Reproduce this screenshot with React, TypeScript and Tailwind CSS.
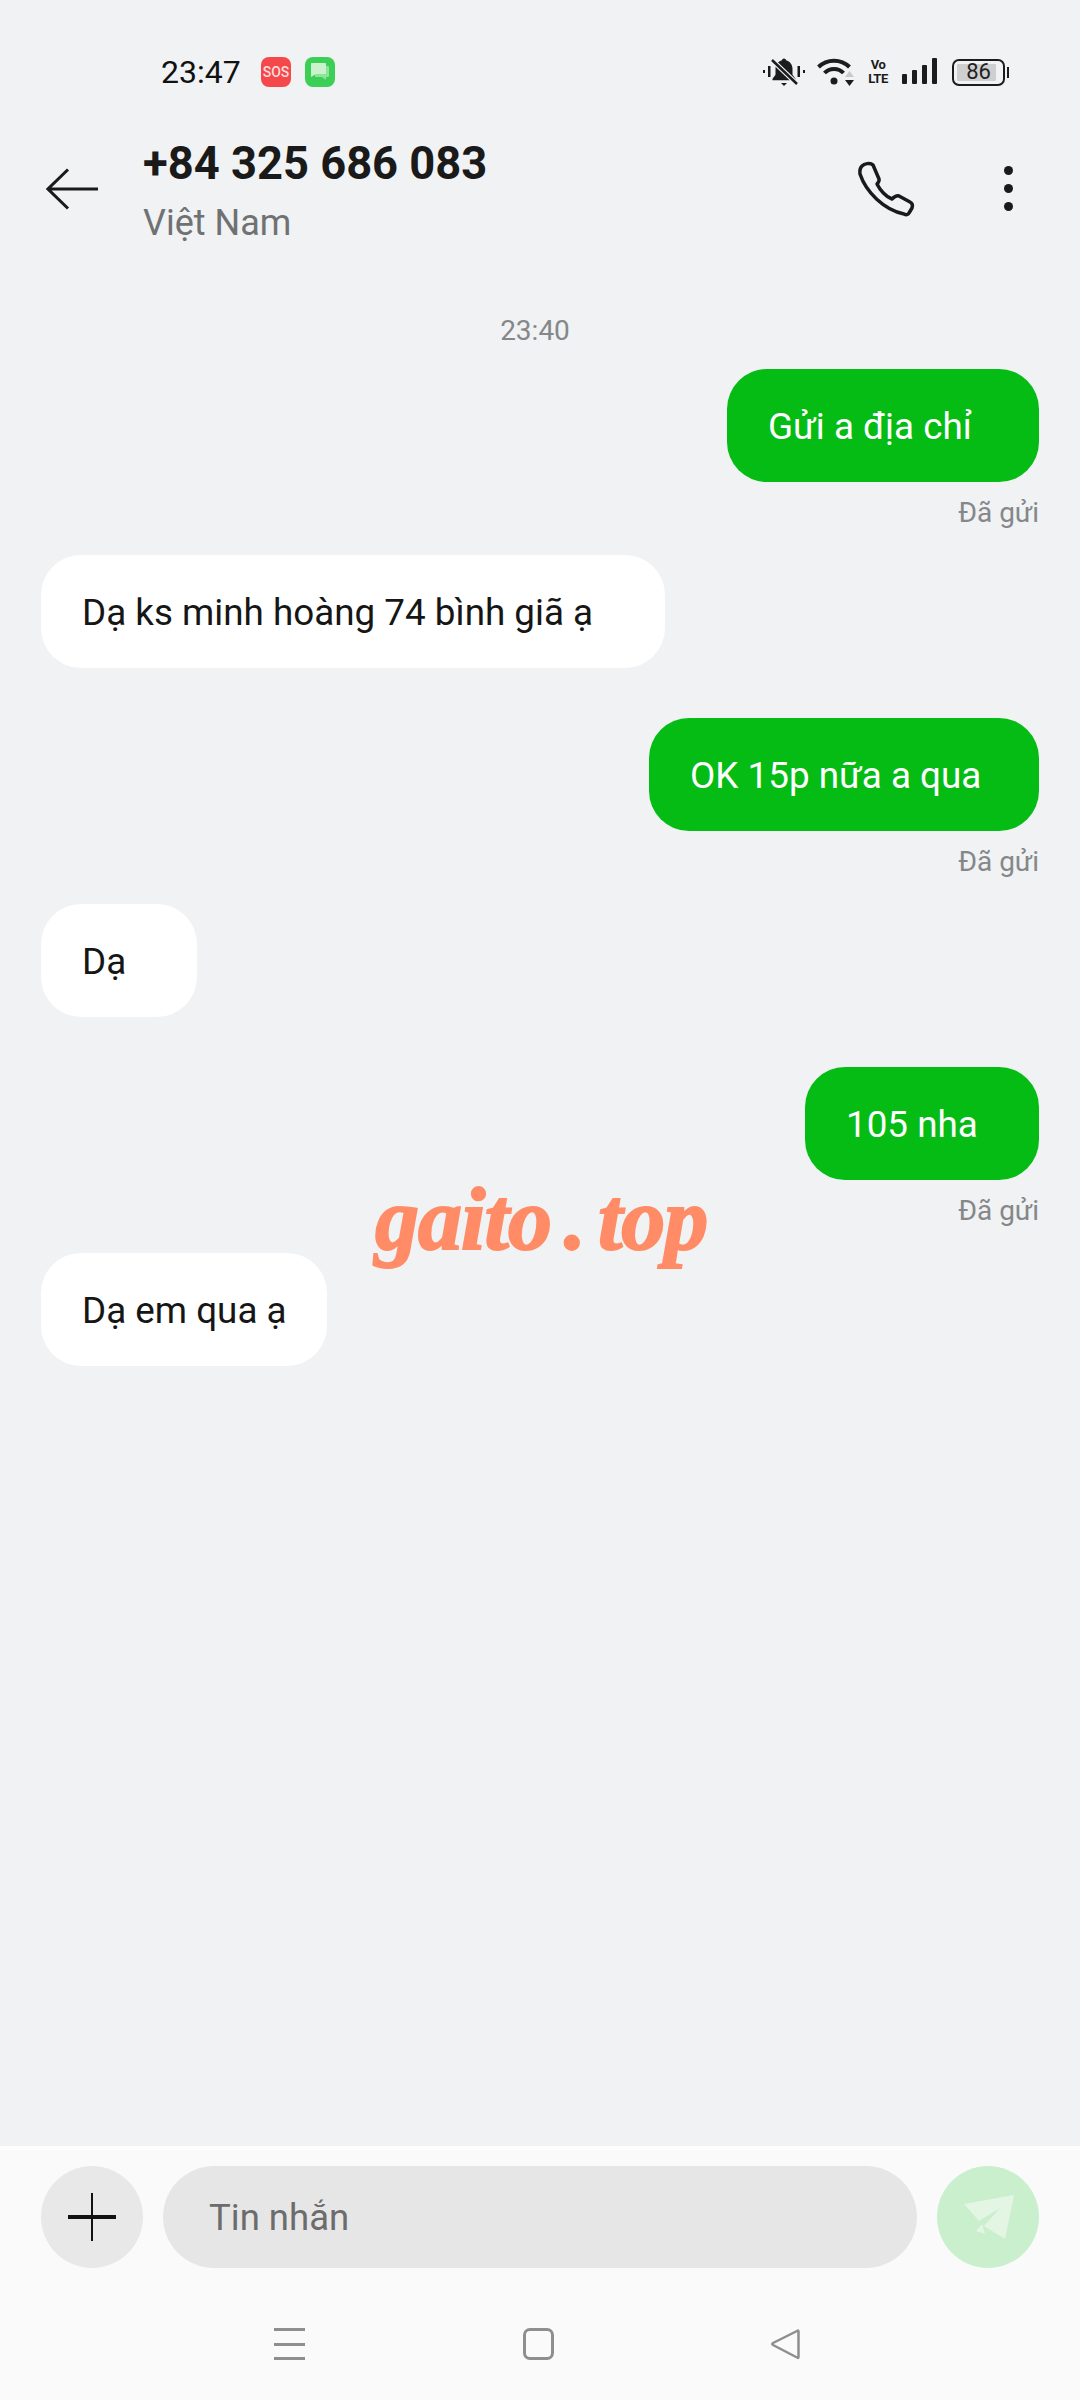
const font = { fontFamily: "Roboto, 'Noto Sans', sans-serif" };

function StatusIcons() {
  return (
    <div className="flex items-center">
      {/* muted bell */}
      <svg width="42" height="30" viewBox="0 0 42 30" className="mr-[12px] text-[#1c1c1c]" fill="currentColor">
        <path d="M21 1.500c1.200 0 2 .900 2 1.800 4 1 6.500 4.500 6.500 8.500v6l3 4v1.500h-23v-1.500l3-4v-6c0-4 2.500-7.500 6.500-8.500 0-.900.800-1.800 2-1.800z" />
        <path d="M18 26h6l-3 3z" />
        <path d="M9 3l25 24" stroke="#f0f2f4" strokeWidth="5" />
        <path d="M9 3l25 24" stroke="currentColor" strokeWidth="2.500" />
        <rect x="0" y="13" width="2" height="3" />
        <rect x="5" y="9" width="2.500" height="11" />
        <rect x="34.500" y="9" width="2.500" height="11" />
        <rect x="40" y="13" width="2" height="3" />
      </svg>
      <svg width="38" height="30" viewBox="0 0 38 30" className="mr-[13px]" fill="none">
        <path d="M1.500 10C10 1.500 24 1.500 32.500 10" stroke="#1c1c1c" strokeWidth="4" />
        <path d="M7.500 16C12.500 10.500 21.500 10.500 26.500 16" stroke="#1c1c1c" strokeWidth="4" />
        <circle cx="17" cy="24" r="3.500" fill="#1c1c1c" />
        <path d="M28 20h9l-4.500-6z" fill="#c9c9c9" />
        <path d="M28 23h9l-4.500 6z" fill="#1c1c1c" />
      </svg>
      <div className="w-[20px] mr-[14px] flex flex-col items-center text-[#1c1c1c] font-bold leading-[14px] text-[13px] tracking-[-0.5px]">
        <span>Vo</span>
        <span>LTE</span>
      </div>
      <svg width="36" height="28" viewBox="0 0 36 28" className="mr-[14px]" fill="#1c1c1c">
        <rect x="0" y="16" width="5" height="10" rx="1" />
        <rect x="10" y="12" width="5" height="14" rx="1" />
        <rect x="20" y="7" width="5" height="19" rx="1" />
        <rect x="30" y="0" width="5" height="26" rx="1" />
      </svg>
      <div className="relative w-[53px] h-[27px] rounded-[7px] border-2 border-[#1c1c1c] p-[3px]">
        <div className="w-[39px] h-full bg-[#cfcfcf] rounded-[1px]"></div>
        <span className="absolute inset-0 flex items-center justify-center text-[22px] leading-none text-[#222222]">86</span>
        <div className="absolute right-[-6px] top-[6px] w-[2px] h-[11px] bg-[#1c1c1c]"></div>
      </div>
    </div>
  );
}

function Sent({ text, width }: { text: string; width: string }) {
  return (
    <div className="flex flex-col items-end">
      <div className={`h-[113px] rounded-[40px] bg-[#05bc14] text-white text-[36.8px] pt-[3px] pl-[41px] flex items-center ${width}`}>
        {text}
      </div>
      <div className="mt-[15px] h-[32px] leading-[32px] text-[28px] text-[#85878a]">Đã gửi</div>
    </div>
  );
}

function Received({ text, width }: { text: string; width: string }) {
  return (
    <div className={`h-[113px] rounded-[40px] bg-white text-[#161616] text-[36.8px] pt-[3px] pl-[41px] flex items-center ${width}`}>
      {text}
    </div>
  );
}

export default function App() {
  return (
    <div className="relative w-[1080px] h-[2400px] bg-[#f0f2f4] flex flex-col overflow-hidden" style={font}>
      {/* Status bar */}
      <div className="h-[144px] shrink-0 flex pl-[161px] pr-[75px] pt-[57px] justify-between items-start">
        <div className="flex items-center">
          <span className="w-[100px] text-[32px] leading-[30px] text-[#111111]">23:47</span>
          <div className="w-[30px] h-[30px] rounded-[8px] bg-[#f5484a] text-[#ffdcdc] text-[14px] font-medium leading-none flex items-center justify-center">SOS</div>
          <div className="w-[30px] h-[30px] ml-[14px] rounded-[8px] bg-[#3ccf55] flex items-center justify-center">
            <svg width="24" height="24" viewBox="0 0 24 24">
              <path d="M7 6h13a1 1 0 0 1 1 1v9a1 1 0 0 1-1 1h-2v3l-4-3H7z" fill="#8fe39b" />
              <path d="M3 3h14a1 1 0 0 1 1 1v9a1 1 0 0 1-1 1H8l-5 3z" fill="#c9f2cd" />
            </svg>
          </div>
        </div>
        <StatusIcons />
      </div>

      {/* Header */}
      <div className="relative h-[120px] shrink-0 flex pl-[46px]">
        <svg width="52" height="42" viewBox="0 0 52 42" fill="none" className="mt-[24px] mr-[45px]">
          <path d="M22 1.500L2 21l20 19.500M2 21h50" stroke="#1a1a1a" strokeWidth="3" />
        </svg>
        <div className="-mt-[4px]">
          <div className="text-[45.3px] leading-[48px] font-bold text-[#1a1a1a]">+84 325 686 083</div>
          <div className="mt-[13px] text-[36px] leading-[44px] text-[#6f7173]">Việt Nam</div>
        </div>
        <svg width="90" height="80" viewBox="0 0 90 80" fill="none" className="absolute left-[840px] top-[6px]">
          <path d="M22 16C24 14 30 12 33 15L39 29C39.500 31 38 33 37 34C40 40 46 47 52 49C54 47 56 45 59 46L70 52C72 53 73 55 72 58L69 63C68 65 66 65 64 64C44 60 26 42 20 24C19.500 20 20 18 22 16Z" stroke="#1a1a1a" strokeWidth="3.500" strokeLinejoin="round" />
        </svg>
        <div className="absolute left-[1004px] top-[22px] flex flex-col gap-[9px]">
          <div className="w-[9px] h-[9px] rounded-full bg-[#1a1a1a]"></div>
          <div className="w-[9px] h-[9px] rounded-full bg-[#1a1a1a]"></div>
          <div className="w-[9px] h-[9px] rounded-full bg-[#1a1a1a]"></div>
        </div>
      </div>

      {/* Messages */}
      <div className="flex-1 flex flex-col px-[41px]">
        <div className="mt-[49px] mb-[20px] pr-[10px] h-[36px] leading-[36px] text-center text-[28px] text-[#85878a]">23:40</div>
        <Sent text="Gửi a địa chỉ" width="w-[312px]" />
        <div className="mt-[26px]">
          <Received text="Dạ ks minh hoàng 74 bình giã ạ" width="w-[624px]" />
        </div>
        <div className="mt-[50px]">
          <Sent text="OK 15p nữa a qua" width="w-[390px]" />
        </div>
        <div className="mt-[26px]">
          <Received text="Dạ" width="w-[156px]" />
        </div>
        <div className="mt-[50px]">
          <Sent text="105 nha" width="w-[234px]" />
        </div>
        <div className="mt-[26px]">
          <Received text="Dạ em qua ạ" width="w-[286px]" />
        </div>
      </div>

      {/* Composer */}
      <div className="h-[254px] shrink-0 bg-[#fafafa] border-t-[4px] border-[#fdfdfd]">
        <div className="flex pl-[41px] pt-[16px]">
          <div className="relative w-[102px] h-[102px] rounded-full bg-[#e8e8e8]">
            <div className="absolute left-[27px] top-[49px] w-[48px] h-[4px] bg-[#111111]"></div>
            <div className="absolute left-[50px] top-[27px] w-[2px] h-[48px] bg-[#111111]"></div>
          </div>
          <div className="ml-[20px] w-[754px] h-[102px] rounded-full bg-[#e6e6e6] flex items-center pt-[3px] pl-[46px] text-[36.5px] text-[#6c6c6c]">Tin nhắn</div>
          <div className="ml-[20px] w-[102px] h-[102px] rounded-full bg-[#c9efcc]">
            <svg width="102" height="102" viewBox="0 0 102 102">
              <path d="M77 29L27 38L42 55L63 42L47 60L68 73Z" fill="#e3f6e4" />
              <path d="M45 58L39 65L48 68Z" fill="#e3f6e4" />
            </svg>
          </div>
        </div>
        {/* Nav bar */}
        <div className="flex mt-[60px] pl-[274px]">
          <div className="w-[31px] h-[32px] flex flex-col justify-between">
            <div className="h-[3px] bg-[#8e8e8e]"></div>
            <div className="h-[3px] bg-[#8e8e8e]"></div>
            <div className="h-[3px] bg-[#8e8e8e]"></div>
          </div>
          <div className="ml-[218px] w-[31px] h-[32px] rounded-[7px] border-[3px] border-[#8e8e8e]"></div>
          <svg width="31" height="32" viewBox="0 0 31 32" fill="none" className="ml-[216px]">
            <path d="M28 2.500L3 15c-1 .700-1 1.300 0 2l25 13c.500-.100.500-.500.500-1V3.500c0-.500 0-.900-.500-1z" stroke="#8e8e8e" strokeWidth="2.500" strokeLinejoin="round" />
          </svg>
        </div>
      </div>

      {/* Watermark */}
      <div
        className="absolute left-[375px] top-[1165px] text-[88px] leading-[110px] font-bold italic text-[#ff8c66] whitespace-nowrap tracking-[-1px] [word-spacing:-8px] [-webkit-text-stroke:2px_#ff8c66]"
        style={{ fontFamily: "'Liberation Serif', serif" }}
      >
        gaito . top
      </div>
    </div>
  );
}
